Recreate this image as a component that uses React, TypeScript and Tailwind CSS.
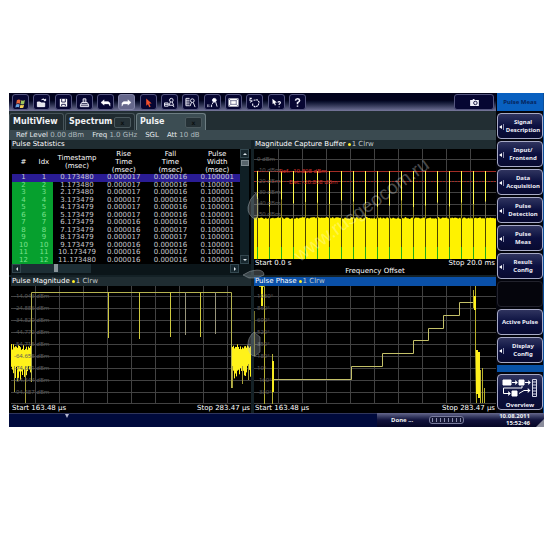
import type { ReactNode } from "react";
import clsx from "clsx";

const rise = [17, 17, 17, 17, 17, 17, 16, 16, 17, 16, 16, 16];
const fall = [16, 16, 16, 16, 16, 16, 16, 17, 17, 16, 17, 16];
const stamps = [80, 80, 80, 79, 79, 79, 79, 79, 79, 79, 79, 80];

const pulses = stamps.map((s, i) => ({
  id: i + 1,
  timestamp: `${i}.1734${s}`,
  rise: `0.0000${rise[i]}`,
  fall: `0.0000${fall[i]}`,
  width: "0.100001",
}));

// small deterministic noise so the traces look the same on every render
const noise = (n: number) => {
  const v = Math.sin(n * 12.9898) * 43758.5453;
  return v - Math.floor(v);
};

const icons: { label: string; lit?: boolean; art: ReactNode }[] = [
  {
    label: "Windows",
    art: (
      <g stroke="none">
        <path d="M2 3.5q2-1.5 4-.3L5.3 7.4q-2-1.2-4 .1z" fill="#e8673c" />
        <path d="M6.8 3.6q2 1.1 4-.3L10 7.4q-2 1.3-4 .3z" fill="#9dc35a" />
        <path d="M1.1 8.2q2-1.3 4-.1l-.7 3.2q-2-1-4 .2z" fill="#6aa5e0" />
        <path d="M5.9 8.4q2 1.1 4-.2l-.7 3.3q-2 1.3-4 .2z" fill="#f3cf55" />
      </g>
    ),
  },
  {
    label: "Open",
    art: <path d="M1.500 5.500h3l1 1h4v4h-8zM6 3q2-2 4 .5M10.500 2v2h-2" fill="#fff" fillOpacity=".9" />,
  },
  {
    label: "Save",
    art: (
      <>
        <path d="M2 2h8v8.500H2z" fill="#fff" stroke="none" />
        <path d="M4 2v3.500h4V2M4 10V8h4v2" stroke="#1a1a48" />
      </>
    ),
  },
  {
    label: "Print",
    art: <path d="M4.500 6V2h3v4M1.500 8.500L3 6h6l1.500 2.500v2h-9zM1.500 8.500h9" fill="#fff" fillOpacity=".25" />,
  },
  { label: "Undo", art: <path d="M1 6l3.500-3v2H9l2 1.500V10L9.500 7.500h-5V9z" fill="#fff" strokeWidth=".4" /> },
  { label: "Redo", lit: true, art: <path d="M11 6L7.500 3v2H3L1 6.500V10l1.500-2.500h5V9z" fill="#fff" strokeWidth=".4" /> },
  { label: "Select", art: <path d="M3.500 1.500l6 5.500-2.700.2 1.500 3.400-1.500.7-1.400-3.500L3.500 9.500z" fill="#f2502c" stroke="none" /> },
  {
    label: "Zoom",
    art: (
      <>
        <circle cx="8" cy="3.500" r="2" />
        <path d="M.5 6.500h4V10h-4zM.5 8h4M7 5.500L5.500 9h5L9 5.500M9.500 9l1.500 2" />
      </>
    ),
  },
  {
    label: "Multiple zoom",
    art: (
      <>
        <circle cx="8" cy="4" r="2" />
        <path d="M1 1.500h4M1 3.500h4M1 5.500h4M1 7.500h4M1 9.500h4M1 1.500v8M7 6L5.500 10M9 6l2 5" />
      </>
    ),
  },
  {
    label: "Zoom off",
    art: (
      <>
        <circle cx="8" cy="3.500" r="2" fill="#fff" />
        <path d="M7 5.500L5.500 8M9.500 5.500l1.500 5M1 8v3M3 8.500v.5M3 10v.5M5 8.500V11" />
      </>
    ),
  },
  {
    label: "Full screen",
    art: (
      <>
        <path d="M.5 1.500h11v9H.5z" fill="#fff" stroke="none" />
        <path d="M3 4h6v4H3zM.5 1.500L3 4M11.500 1.500L9 4M.5 10.500L3 8M11.500 10.500L9 8" stroke="#3a3b68" strokeWidth=".7" />
      </>
    ),
  },
  { label: "Sequencer", art: <path d="M3 1.500H1v2h2v2H1M5 3.500l4-.5 2 2.500-1 4-3.500 1.200L4 9V6.500" strokeDasharray="2.200 .7" strokeWidth="1.200" /> },
  {
    label: "Context help",
    art: (
      <>
        <path d="M1.500 2l5 4-2.200.3 1 2.400-1 .5-1.100-2.500L1.800 8z" fill="#fff" stroke="none" />
        <path d="M7.300 5.800q1.700-1.500 3 0 .4 1-1.400 2v1M8.900 10.400v.7" strokeWidth="1.200" />
      </>
    ),
  },
  { label: "Help", art: <path d="M3.800 4Q4 2 6 2t2.300 1.800Q8.300 5 6 6.200v1.600M6 9.200v1.500" strokeWidth="1.700" /> },
];

const softkeys = [
  { lines: ["Signal", "Description"], arrow: true },
  { lines: ["Input/", "Frontend"], arrow: true },
  { lines: ["Data", "Acquisition"], arrow: true },
  { lines: ["Pulse", "Detection"], arrow: true },
  { lines: ["Pulse", "Meas"], arrow: true },
  { lines: ["Result", "Config"], arrow: true },
  { lines: [], arrow: false },
  { lines: ["Active Pulse"], arrow: false },
  { lines: ["Display", "Config"], arrow: true },
];

function Toolbar() {
  return (
    <div className="flex h-[18px] items-center justify-between bg-linear-to-b from-[#02031c] from-40% to-[#77789c] pr-[2px] pl-[3px]">
      <div className="flex w-[294px] justify-between">
        {icons.map((icon) => (
          <button
            key={icon.label}
            aria-label={icon.label}
            className={clsx(
              "flex h-4 w-[17px] items-center justify-center rounded-[3px] border",
              icon.lit ? "border-[#8385a8] bg-[#66688c]" : "border-[#55567f] bg-[#060632]"
            )}
          >
            <svg viewBox="0 0 12 12" className="size-[11px]" fill="none" stroke="#f4f4ff" strokeWidth="1">
              {icon.art}
            </svg>
          </button>
        ))}
      </div>
      <button aria-label="Screenshot" className="flex h-4 w-10 items-center justify-center rounded-[3px] border border-[#55567f] bg-[#060632]">
        <svg viewBox="0 0 10 8" className="h-[7px] w-[9px]">
          <path d="M0 1h3V0h2v1h5v7H0z" fill="#f0f0fa" />
          <circle cx="6" cy="4.500" r="2" fill="#e8e8f4" stroke="#060632" />
        </svg>
      </button>
    </div>
  );
}

function Tab({ name, active, closable }: { name: string; active?: boolean; closable?: boolean }) {
  return (
    <div
      className={clsx(
        "flex h-[17px] items-center justify-between rounded-t-[3px] border-t border-r border-l px-[3px] text-[8px] font-bold",
        closable ? "w-[70px]" : "w-[55px]",
        active ? "border-[#6d7d82] bg-[#3c4d53]" : "border-[#47545a] bg-[#202b30]"
      )}
    >
      <button>{name}</button>
      {closable && (
        <button
          aria-label={`Close ${name}`}
          className="flex h-[11px] w-[17px] items-center justify-center rounded-[2px] border border-[#4b595e] bg-[#253136] text-[6px] text-[#0b1012]"
        >
          x
        </button>
      )}
    </div>
  );
}

function Setting({ name, value }: { name: string; value?: string }) {
  return (
    <span className="text-[#e6ebee]">
      {name} {value && <span className="text-[#aeb9be]">{value}</span>}
    </span>
  );
}

function PanelTitle({ children, trace, selected }: { children: ReactNode; trace?: boolean; selected?: boolean }) {
  return (
    <h2
      className={clsx(
        "flex h-[9px] items-center gap-[2px] px-px text-[7px] leading-[9px] whitespace-nowrap text-white",
        selected ? "bg-[#0a50a8]" : "bg-[#1f2c31]"
      )}
    >
      {children}
      {trace && (
        <span className="flex items-center gap-px text-[#c3cacd]">
          <span className="size-[3px] rounded-full bg-[#ffef28]" />1 Clrw
        </span>
      )}
    </h2>
  );
}

function ScrollButton({ d, label }: { d: string; label: string }) {
  return (
    <button aria-label={label} className="flex size-[9px] shrink-0 items-center justify-center border border-[#33474f] bg-[#17272e]">
      <svg viewBox="0 0 4 4" className="size-1">
        <path d={d} fill="#dfe8ec" />
      </svg>
    </button>
  );
}

function Statistics() {
  const head = "p-0 text-center align-middle font-normal";
  return (
    <section className="flex flex-col bg-black pl-[2px]">
      <PanelTitle>Pulse Statistics</PanelTitle>
      <div className="flex pr-[2px] pl-px">
        <table className="h-[115px] flex-1 table-fixed text-center text-[7px] leading-[7px] text-[#c9c9cf]">
          <thead>
            <tr className="h-[25px] leading-[8px] text-white">
              <th className={clsx(head, "w-[10%]")}>#</th>
              <th className={clsx(head, "w-[8%]")}>Idx</th>
              <th className={clsx(head, "w-[21%]")}>Timestamp<br />(msec)</th>
              <th className={clsx(head, "w-[20%]")}>Rise<br />Time<br />(msec)</th>
              <th className={clsx(head, "w-[21%]")}>Fall<br />Time<br />(msec)</th>
              <th className={clsx(head, "w-[20%]")}>Pulse<br />Width<br />(msec)</th>
            </tr>
          </thead>
          <tbody>
            {pulses.map((p) => (
              <tr key={p.id} className={p.id === 1 ? "bg-[#2a1c94]" : undefined}>
                <td className={clsx("p-0", p.id > 1 && "bg-[#06a02e] text-[#7be08e]")}>{p.id}</td>
                <td className={clsx("p-0", p.id > 1 && "bg-[#06a02e] text-[#7be08e]")}>{p.id}</td>
                <td className="p-0">{p.timestamp}</td>
                <td className="p-0">{p.rise}</td>
                <td className="p-0">{p.fall}</td>
                <td className="p-0">{p.width}</td>
              </tr>
            ))}
          </tbody>
        </table>
        <div className="flex w-[9px] flex-col items-center bg-[#0f1f25]">
          <ScrollButton label="Scroll up" d="M2 1l2 2H0z" />
          <div className="mt-[2px] h-[6px] w-2 border border-[#7c898f] bg-[#56646b]" />
          <div className="flex-1" />
          <ScrollButton label="Scroll down" d="M2 3l2-2H0z" />
        </div>
      </div>
      <div className="flex flex-1 items-start bg-[#0b1519] pr-3 pl-px">
        <ScrollButton label="Scroll left" d="M1 2l2-2v4z" />
        <div className="flex h-[9px] w-[70px] justify-center bg-[#1d2e35]">
          <div className="h-[8px] w-[4px] bg-[#89949a]" />
        </div>
        <div className="flex-1" />
        <ScrollButton label="Scroll right" d="M3 2L1 0v4z" />
      </div>
    </section>
  );
}

function Grid({ rows }: { rows: number[] }) {
  return (
    <g stroke="#424242" strokeWidth="1">
      {[24, 48, 72, 96, 120, 144, 168, 192, 216].map((x) => (
        <path key={x} d={`M${x + 0.5} 0V118`} />
      ))}
      {rows.map((y) => (
        <path key={y} d={`M0 ${y + 0.5}H242`} />
      ))}
    </g>
  );
}

function Scale({ labels, className }: { labels: string[]; className: string }) {
  return (
    <ul className={clsx("absolute left-[3px] font-['Noto_Sans',sans-serif] text-[6px] text-[#5c5c5c]", className)}>
      {labels.map((l) => (
        <li key={l}>{l}</li>
      ))}
    </ul>
  );
}

function CaptureBuffer() {
  const starts = Array.from({ length: 20 }, (_, i) => 3 + i * 12);
  const top = Array.from({ length: 243 }, (_, x) => `L${x} ${(68 + noise(x) * 2).toFixed(1)}`).join("");
  return (
    <section className="flex flex-col bg-black">
      <PanelTitle trace>Magnitude Capture Buffer</PanelTitle>
      <div className="relative h-[110px]">
        <svg viewBox="0 0 242 110" preserveAspectRatio="none" className="block size-full">
          <Grid rows={[10, 22, 32, 43, 55, 66]} />
          <path d={`M0 110${top}V110z`} fill="#fff200" />
          <path d="M0 22.500H242" stroke="#a32c25" />
          <path d="M0 32.500H242" stroke="#a32c25" strokeDasharray="2 1" />
          {starts.map((x, i) => (
            <g key={x}>
              <path d={`M${x + 0.5} 50V69`} stroke={i % 4 === 3 ? "#6d6950" : "#8f8624"} />
              <path d={`M${x + 0.5} 22V${50 + noise(i) * 8}`} stroke="#fff94a" />
              <path d={`M${x + 0.5} 69V99`} stroke="#4b4500" />
              <path d={`M${x + 0.5} 98V110`} stroke="#25a81c" />
            </g>
          ))}
        </svg>
        <Scale className="top-[5px] leading-[11px]" labels={["0 dBm", "-10 dBm", "-20 dBm", "-30 dBm", "-40 dBm", "-50 dBm"]} />
        <span className="absolute top-[18px] left-[25px] font-['Noto_Sans',sans-serif] text-[6px] leading-[9px] text-[#d6342e]">Ref. -10.808 dBm</span>
        <span className="absolute top-[29px] left-[35px] font-['Noto_Sans',sans-serif] text-[6px] leading-[9px] text-[#d6342e]">Det. -20.808 dBm</span>
      </div>
      <div className="flex justify-between px-px text-[7px] leading-[9px] text-white">
        <span>Start 0.0 s</span>
        <span>Stop 20.0 ms</span>
      </div>
      <div className="text-center text-[7px] leading-[7px] text-white">Frequency Offset</div>
    </section>
  );
}

function Range() {
  return (
    <div className="flex justify-between bg-black px-px text-[7px] leading-[9px] text-white">
      <span>Start 163.48 µs</span>
      <span>Stop 283.47 µs</span>
    </div>
  );
}

const rows = [10, 22, 34, 46, 58, 70, 82, 94, 106, 117];

function burst(from: number, to: number) {
  let d = "";
  for (let x = from; x <= to; x += 1) {
    d += `M${x + 0.5} ${(58 + noise(x) * 6).toFixed(1)}V${(78 + noise(x + 7) * 17).toFixed(1)}`;
  }
  return d;
}

function PulseMagnitude() {
  const dips = [[97, 52], [128, 53], [159, 51], [174, 49], [189, 51], [204, 48]];
  return (
    <section className="bg-black pl-[2px]">
      <PanelTitle trace>Pulse Magnitude</PanelTitle>
      <div className="relative h-[118px]">
        <svg viewBox="0 0 240 118" preserveAspectRatio="none" className="block size-full">
          <Grid rows={rows} />
          <path d="M20.500 96V6.500H220.500V102" stroke="#b5b350" fill="none" />
          {dips.map(([x, y]) => (
            <path key={x} d={`M${x + 0.5} 6V${y}`} stroke={x === 174 || x === 204 ? "#98957a" : "#cfc93e"} />
          ))}
          <path d={burst(0, 19) + burst(221, 239)} stroke="#fff21a" />
          <path d="M3.500 80V106M14.500 80V117M221.500 80V102M231.500 80V98M237.500 78V94" stroke="#a49d38" />
        </svg>
        <Scale
          className="top-1 leading-[12px]"
          labels={["-14.943 dBm", "-24.886 dBm", "-34.829 dBm", "-44.772 dBm", "-54.715 dBm", "-64.658 dBm", "-74.601 dBm", "-84.544 dBm", "-94.487 dBm"]}
        />
      </div>
      <Range />
    </section>
  );
}

function PulsePhase() {
  return (
    <section className="bg-black">
      <PanelTitle trace selected>Pulse Phase</PanelTitle>
      <div className="relative h-[118px]">
        <svg viewBox="0 0 242 118" preserveAspectRatio="none" className="block size-full">
          <Grid rows={rows} />
          <g fill="none">
            <path d="M.5 25V70" stroke="#75712b" />
            <path d="M5 .5H10.500V118M18.500 118V68" stroke="#b5b035" />
            <path d="M8 0V20M19 75V106" stroke="#f5ea20" strokeWidth="2" />
            <path d="M19.500 93.500H97.500V80.500H128.500V67.500H159.500V54.500H174.500V42.500H189.500V29.500H205.500V16.500H220.500" stroke="#c4c068" />
            <path d="M219.500 4V22M221.500 0V65L222.500 117M228.500 82V117M230.500 102V117" stroke="#b8b02c" />
            <path d="M221 10V24M223 64V108M225 66V112" stroke="#fff01c" strokeWidth="2" />
            <path d="M226.500 84V117" stroke="#c9c02c" />
          </g>
        </svg>
        <Scale
          className="top-1 leading-[12px]"
          labels={["1030°", "860°", "690°", "520°", "350°", "180°", "10°", "-160°", "-330°"]}
        />
      </div>
      <Range />
    </section>
  );
}

function Watermark() {
  return (
    <div className="pointer-events-none absolute inset-0">
      <span className="absolute top-[58px] left-[272px] -rotate-36 text-[19px] leading-6 whitespace-nowrap font-['Liberation_Sans',sans-serif] text-white/30">
        www.rusgeocom.ru
      </span>
      <svg viewBox="0 0 24 170" className="absolute top-[52px] left-[232px] h-[170px] w-6" fill="#a9b4bb" fillOpacity=".3" stroke="#c3ccd2" strokeOpacity=".35">
        <path d="M15 1Q8 7 7 15t8 13l2-6V7z" />
        <path d="M2 83Q9 78 16 78t7 5l-7 3H8z" />
        <path d="M13 140q-7 6-6 15t7 9l5-4v-15z" />
      </svg>
    </div>
  );
}

function Softkey({ lines, arrow }: { lines: string[]; arrow: boolean }) {
  if (lines.length === 0) {
    return <div className="h-[26px] rounded-[4px] border border-[#22222c] bg-[#05050c]" />;
  }
  return (
    <button className="relative flex h-[26px] items-center justify-center rounded-[4px] border border-[#a7aac6] bg-linear-to-b from-[#30345f] via-[#0c1040] to-[#080a30] font-['Noto_Sans',sans-serif] text-[6px] leading-[8px] font-bold text-[#eeeef8]">
      {arrow && (
        <svg viewBox="0 0 5 6" className="absolute top-[10px] left-px h-[6px] w-[5px]">
          <path d="M3 1L0 3l3 2z" fill="#fff" />
          <path d="M4.500 0v6" stroke="#8d90ae" />
        </svg>
      )}
      <span className={clsx("whitespace-nowrap", arrow && "pl-[6px]")}>
        {lines.map((line) => (
          <span key={line} className="block">{line}</span>
        ))}
      </span>
    </button>
  );
}

function Sidebar() {
  return (
    <aside className="flex w-12 shrink-0 flex-col gap-[2px] border-r border-[#0a4f9c] bg-[#03040c] pl-px">
      <h2 className="h-[18px] bg-[#0960c0] text-center font-['Noto_Sans',sans-serif] text-[6px] leading-[18px] font-bold text-[#06245c]">Pulse Meas</h2>
      {softkeys.map((key, i) => (
        <Softkey key={i} lines={key.lines} arrow={key.arrow} />
      ))}
      <div className="h-[7px] bg-[#0752a8]" />
      <button className="flex h-9 flex-col items-center justify-between rounded-[4px] border border-[#a7aac6] bg-linear-to-b from-[#30345f] via-[#0c1040] to-[#080a30] pt-1 font-['Noto_Sans',sans-serif] text-[6px] leading-[8px] font-bold text-[#eeeef8]">
        <svg viewBox="0 0 36 18" className="h-[18px] w-9" fill="none" stroke="#fff">
          <path d="M1 1h8v5H1zM17 1h5v5h-5zM10 12h5v5h-5z" fill="#fff" />
          <path d="M10 3.500h5M23 3.500h5M20 7v2H1.500v5.500H8M17 14.500l5-3h6" />
          <path d="M13.500 1.500l2 2-2 2zM26.500 1.500l2 2-2 2zM6.500 12.500l2 2-2 2zM26 9.500l2 2-2 2z" fill="#fff" strokeWidth=".5" />
          <path d="M30.500.5h4v17h-4zM30.500 3h4M30.500 6h4M30.500 9h4M30.500 12h4M30.500 15h4" stroke="#d7d8e8" />
        </svg>
        Overview
      </button>
    </aside>
  );
}

function StatusBar() {
  return (
    <footer className="flex h-[14px] bg-[#000a3c] font-['Noto_Sans',sans-serif] text-[6px] leading-[7px] font-bold">
      <div className="flex-1 border-t border-[#30365c] pl-[56px]">
        <svg viewBox="0 0 4 5" className="h-[5px] w-1">
          <path d="M0 0h4L2 4z" fill="#b5b8cf" />
        </svg>
      </div>
      <div className="flex w-[167px] items-center bg-linear-to-b from-[#66688c] via-[#12133c] to-[#050624] pl-[14px]">
        <span className="w-[38px]">Done ...</span>
        <div className="flex h-2 w-[35px] justify-around rounded-[3px] border border-[#777a9c] bg-[#161837] py-px">
          {Array.from({ length: 8 }, (_, i) => (
            <span key={i} className="w-px bg-[#8b8eae]" />
          ))}
        </div>
        <div className="flex-1 text-right whitespace-nowrap">
          10.08.2011
          <br />
          15:52:46
        </div>
        <svg viewBox="0 0 8 8" className="ml-[6px] size-2 self-end">
          <path d="M8 0v8H0z" fill="#8b8d9c" />
        </svg>
      </div>
    </footer>
  );
}

export default function App() {
  return (
    <div className="min-h-screen bg-white px-[9px] pt-[93px] font-['DejaVu_Sans',sans-serif] text-[#f0f2f4]">
      <div className="bg-black">
        <div className="flex">
          <main className="min-w-0 flex-1">
            <Toolbar />
            <nav className="flex h-[19px] items-end gap-px bg-[#222e33]">
              <Tab name="MultiView" />
              <Tab name="Spectrum" closable />
              <Tab name="Pulse" active closable />
            </nav>
            <div className="flex h-[10px] gap-2 bg-[#3a4a50] px-[7px] text-[7px] leading-[10px] whitespace-nowrap">
              <Setting name="Ref Level" value="0.00 dBm" />
              <Setting name="Freq" value="1.0 GHz" />
              <Setting name="SGL" />
              <Setting name="Att" value="10 dB" />
            </div>
            <div className="relative grid grid-cols-2 gap-x-[3px] gap-y-[2px] bg-[#142126]">
              <Statistics />
              <CaptureBuffer />
              <PulseMagnitude />
              <PulsePhase />
              <Watermark />
            </div>
          </main>
          <Sidebar />
        </div>
        <StatusBar />
      </div>
    </div>
  );
}
